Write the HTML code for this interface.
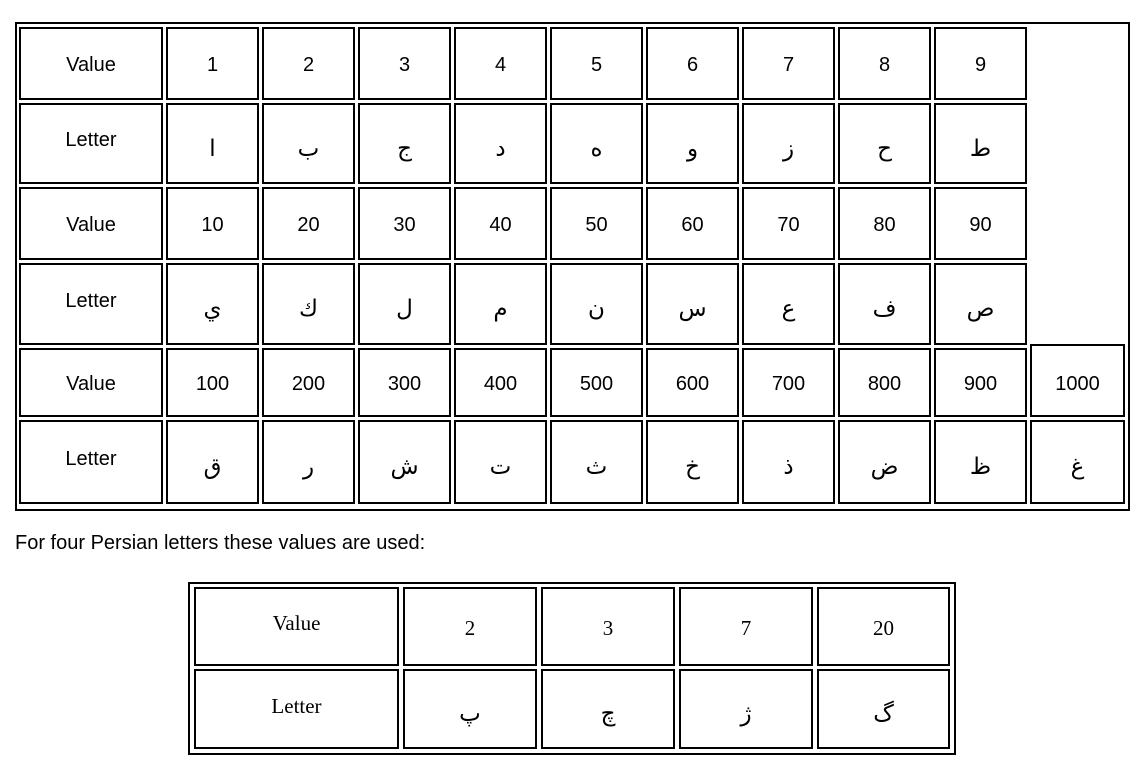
<!DOCTYPE html>
<html><head><meta charset="utf-8"><style>
body{margin:0;width:1140px;height:778px;background:#fff;position:relative;font-family:"Liberation Sans","DejaVu Sans",sans-serif;color:#000}
.b{position:absolute;border:2px solid #000;box-sizing:border-box}
.c{position:absolute;border:2px solid #000;box-sizing:border-box;display:flex;align-items:center;justify-content:center;font-size:20px;padding-top:3px}
.a{font-size:23px;padding-top:10px;font-family:"DejaVu Sans",sans-serif}
.l{padding-bottom:6px;padding-top:0}
.s{font-family:"Liberation Serif",serif;font-size:21px}
p{position:absolute;left:15px;top:532px;margin:0;font-size:20px}
</style></head><body>
<div class="b" style="left:15px;top:22px;width:1115px;height:489px"></div>

<div class="c" style="left:19px;top:27px;width:144px;height:73px">Value</div>
<div class="c" style="left:166px;top:27px;width:93px;height:73px">1</div>
<div class="c" style="left:262px;top:27px;width:93px;height:73px">2</div>
<div class="c" style="left:358px;top:27px;width:93px;height:73px">3</div>
<div class="c" style="left:454px;top:27px;width:93px;height:73px">4</div>
<div class="c" style="left:550px;top:27px;width:93px;height:73px">5</div>
<div class="c" style="left:646px;top:27px;width:93px;height:73px">6</div>
<div class="c" style="left:742px;top:27px;width:93px;height:73px">7</div>
<div class="c" style="left:838px;top:27px;width:93px;height:73px">8</div>
<div class="c" style="left:934px;top:27px;width:93px;height:73px">9</div>

<div class="c l" style="left:19px;top:103px;width:144px;height:81px">Letter</div>
<div class="c a" style="left:166px;top:103px;width:93px;height:81px">ا</div>
<div class="c a" style="left:262px;top:103px;width:93px;height:81px">ب</div>
<div class="c a" style="left:358px;top:103px;width:93px;height:81px">ج</div>
<div class="c a" style="left:454px;top:103px;width:93px;height:81px">د</div>
<div class="c a" style="left:550px;top:103px;width:93px;height:81px">ه</div>
<div class="c a" style="left:646px;top:103px;width:93px;height:81px">و</div>
<div class="c a" style="left:742px;top:103px;width:93px;height:81px">ز</div>
<div class="c a" style="left:838px;top:103px;width:93px;height:81px">ح</div>
<div class="c a" style="left:934px;top:103px;width:93px;height:81px">ط</div>

<div class="c" style="left:19px;top:187px;width:144px;height:73px">Value</div>
<div class="c" style="left:166px;top:187px;width:93px;height:73px">10</div>
<div class="c" style="left:262px;top:187px;width:93px;height:73px">20</div>
<div class="c" style="left:358px;top:187px;width:93px;height:73px">30</div>
<div class="c" style="left:454px;top:187px;width:93px;height:73px">40</div>
<div class="c" style="left:550px;top:187px;width:93px;height:73px">50</div>
<div class="c" style="left:646px;top:187px;width:93px;height:73px">60</div>
<div class="c" style="left:742px;top:187px;width:93px;height:73px">70</div>
<div class="c" style="left:838px;top:187px;width:93px;height:73px">80</div>
<div class="c" style="left:934px;top:187px;width:93px;height:73px">90</div>

<div class="c l" style="left:19px;top:263px;width:144px;height:82px">Letter</div>
<div class="c a" style="left:166px;top:263px;width:93px;height:82px">ي</div>
<div class="c a" style="left:262px;top:263px;width:93px;height:82px">ك</div>
<div class="c a" style="left:358px;top:263px;width:93px;height:82px">ل</div>
<div class="c a" style="left:454px;top:263px;width:93px;height:82px">م</div>
<div class="c a" style="left:550px;top:263px;width:93px;height:82px">ن</div>
<div class="c a" style="left:646px;top:263px;width:93px;height:82px">س</div>
<div class="c a" style="left:742px;top:263px;width:93px;height:82px">ع</div>
<div class="c a" style="left:838px;top:263px;width:93px;height:82px">ف</div>
<div class="c a" style="left:934px;top:263px;width:93px;height:82px">ص</div>

<div class="c" style="left:19px;top:348px;width:144px;height:69px">Value</div>
<div class="c" style="left:166px;top:348px;width:93px;height:69px">100</div>
<div class="c" style="left:262px;top:348px;width:93px;height:69px">200</div>
<div class="c" style="left:358px;top:348px;width:93px;height:69px">300</div>
<div class="c" style="left:454px;top:348px;width:93px;height:69px">400</div>
<div class="c" style="left:550px;top:348px;width:93px;height:69px">500</div>
<div class="c" style="left:646px;top:348px;width:93px;height:69px">600</div>
<div class="c" style="left:742px;top:348px;width:93px;height:69px">700</div>
<div class="c" style="left:838px;top:348px;width:93px;height:69px">800</div>
<div class="c" style="left:934px;top:348px;width:93px;height:69px">900</div>
<div class="c" style="left:1030px;top:344px;width:95px;height:73px;padding-top:8px">1000</div>

<div class="c l" style="left:19px;top:420px;width:144px;height:84px">Letter</div>
<div class="c a" style="left:166px;top:420px;width:93px;height:84px">ق</div>
<div class="c a" style="left:262px;top:420px;width:93px;height:84px">ر</div>
<div class="c a" style="left:358px;top:420px;width:93px;height:84px">ش</div>
<div class="c a" style="left:454px;top:420px;width:93px;height:84px">ت</div>
<div class="c a" style="left:550px;top:420px;width:93px;height:84px">ث</div>
<div class="c a" style="left:646px;top:420px;width:93px;height:84px">خ</div>
<div class="c a" style="left:742px;top:420px;width:93px;height:84px">ذ</div>
<div class="c a" style="left:838px;top:420px;width:93px;height:84px">ض</div>
<div class="c a" style="left:934px;top:420px;width:93px;height:84px">ظ</div>
<div class="c a" style="left:1030px;top:420px;width:95px;height:84px">غ</div>

<p>For four Persian letters these values are used:</p>

<div class="b" style="left:188px;top:582px;width:768px;height:173px"></div>
<div class="c s l" style="left:194px;top:587px;width:205px;height:79px">Value</div>
<div class="c s" style="left:403px;top:587px;width:134px;height:79px">2</div>
<div class="c s" style="left:541px;top:587px;width:134px;height:79px">3</div>
<div class="c s" style="left:679px;top:587px;width:134px;height:79px">7</div>
<div class="c s" style="left:817px;top:587px;width:133px;height:79px">20</div>
<div class="c s l" style="left:194px;top:669px;width:205px;height:80px">Letter</div>
<div class="c a" style="left:403px;top:669px;width:134px;height:80px">پ</div>
<div class="c a" style="left:541px;top:669px;width:134px;height:80px">چ</div>
<div class="c a" style="left:679px;top:669px;width:134px;height:80px">ژ</div>
<div class="c a" style="left:817px;top:669px;width:133px;height:80px">گ</div>
</body></html>
